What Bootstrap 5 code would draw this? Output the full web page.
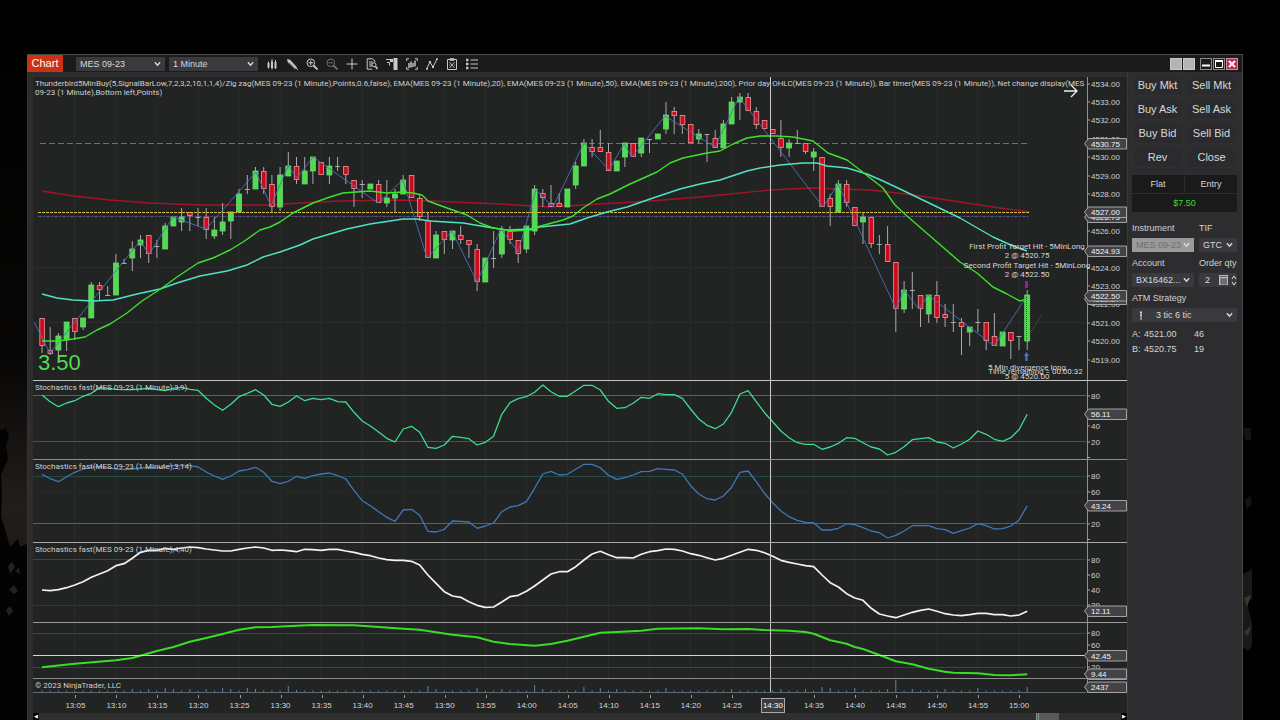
<!DOCTYPE html>
<html lang="en">
<head>
<meta charset="utf-8">
<meta name="viewport" content="width=device-width, initial-scale=1">
<title>Chart - MES 09-23</title>
<link href="https://cdn.jsdelivr.net/npm/bootstrap@5.3.0/dist/css/bootstrap.min.css" rel="stylesheet">
<style>
body{margin:0;background:#000;color:#d4d4d4;font-family:"Liberation Sans",Arial,sans-serif;font-size:8px;line-height:9px;overflow-x:hidden}
.backdrop{min-height:100vh;padding:54px 37px 0 27px;background:#010101;position:relative}
.scenery{position:absolute;top:0;bottom:0;width:32px;height:100%}
.scenery.west{left:0}
.scenery.east{right:11px;width:26px}
.win{min-height:calc(100vh - 54px);background:#2d2d2f;border:1px solid #47474a;border-bottom:0;border-left-color:#333;position:relative}
.titlebar{height:17px;background:#1b1b1b}
.tab-chart{background:#cb3213;color:#fff;font-size:11px;line-height:16px;width:36px;margin-left:-1px}
.pick{appearance:none;-webkit-appearance:none;border:0;border-radius:0;color:#d8d8d8;background:#3a393e url("data:image/svg+xml,%3Csvg xmlns='http://www.w3.org/2000/svg' viewBox='0 0 8 6'%3E%3Cpath d='M1 1l3 3.4L7 1' fill='none' stroke='%23ddd' stroke-width='1.5'/%3E%3C/svg%3E") no-repeat right 4px center/7px 6px;height:14px;padding:0 0 0 4px;font-size:9px;line-height:14px;width:100%}
.pick.tool{width:89px}
.pick.atm{padding-left:24px}
.picks{gap:4px;margin-left:13px}
.pick:disabled{background-color:#9a9a9a;color:#6e6e6e;opacity:1}
.toolbtn{border:0;background:none;padding:0;width:12px;height:14px;line-height:0;color:#c9c9c9}
.toolbtn svg{width:12px;height:12px}
.winbtns{gap:1px}
.winbtn{border:1px solid #8a8a8a;padding:0;width:12px;height:12px;background:#1c1c1c;line-height:0;color:#fff}
.winbtn.plain{background:#b4b4b4;border-color:#c8c8c8}
.winbtn.shut{background:#b8304a;border-color:#d98a98}
.winbtn svg{width:10px;height:10px;display:block}
.chart-area{padding:5px 0 0 5px;background:#2d2d2f;min-width:0}
.chart-grid{background:#222323}
.pane{position:relative}
.pane .plot{min-width:0}
.pane svg{display:block}
.plot svg{width:100%;height:100%}
.axis{width:41px;flex:none}
.axis svg{width:41px;height:100%;overflow:visible}
.axis text{font-size:8px;fill:#cfcfcf}
.h-price{height:304px}.h-s1{height:79px}.h-s2{height:83px}.h-s3{height:80px}.h-s4{height:56px}.h-vol{height:14px}
.pane-name,.note{font-family:Roboto,"Liberation Sans",sans-serif}
.pane-name{position:absolute;left:2px;top:2px;white-space:nowrap;color:#cfcfcf}
.pane-name.wide{right:0;white-space:normal}
.net{position:absolute;left:5px;bottom:6px;font-size:22px;line-height:24px;color:#4fdc4f}
.note{position:absolute;left:94.4%;transform:translateX(-50%);white-space:nowrap;text-align:center;color:#d6d6d6}
.note.n1{top:165px}.note.n2{top:184px}.note.n3{top:286px}.note.n4{top:290px;left:95.2%}
.go{position:absolute;right:8px;top:7px;width:14px;height:14px;border:0;padding:0;background:none;color:#eee;line-height:0}
.times{height:20px;padding-left:2%}
.times span{flex:0 0 3.98%;text-align:center;position:relative;padding-top:8px}
.times span::before{content:"";position:absolute;left:50%;top:2px;height:3px;width:1px;background:#999}
.times span.now b{color:#fff;background:#3c3c40;border:1px solid #aaa;padding:2px 1px}
.times span.now::before{display:none}
.scroller{height:7px;background:#2f2f30}
.scroller button{border:0;padding:0;background:#000;color:#fff;width:6px;height:7px;font-size:5px;line-height:7px}
.thumb{width:23px;background:#59595c;border-left:3px double #8a8a8a;margin-right:62px}
.side{width:115px;flex:none;padding:2px 5px 0 4px;border-left:1px solid #3b3b3d}
.order{background:#2b2b2d;border:1px solid #303033;border-radius:0;color:#d8d8d8;font-size:11px;line-height:12px;padding:4px 0;flex:1 1 0}
.order-row{margin-bottom:2px;gap:3px}
.pos-row{gap:1px;margin:7px 0 1px}
.pos{background:#1a1a1a;font-size:9px;line-height:18px;text-align:center}
.pos.gain{color:#3ddc3d}
.lab{font-size:9px;line-height:10px;color:#d0d0d0;display:block;margin-bottom:5px}
.fields{margin-top:6px}
.fields.first{margin-top:11px}
.w-inst{width:62px}
.w-tif{width:38px}
.qty{height:14px;background:#3a393e;width:38px}
.qty input{width:16px;background:none;border:0;color:#ddd;font-size:9px;padding:0 0 0 6px;outline:0;height:14px}
.spin{border:0;background:none;padding:0;width:6px;height:6px;line-height:0;color:#ddd}
.spins{margin-left:3px}
.atm-mark{left:7px;top:3px}
.book{font-size:9px;line-height:10px;margin-top:5px}
.book.first{margin-top:7px}
.book .k{width:12px}.book .p{width:50px}
</style>
</head>
<body>
<div class="backdrop">
  <svg class="scenery west" viewBox="0 0 32 720" preserveAspectRatio="none" aria-hidden="true">
    <defs><linearGradient id="haze" x1="0" y1="0" x2="0" y2="1"><stop offset="0" stop-color="#000"/><stop offset=".5" stop-color="#080706"/><stop offset=".7" stop-color="#211d1a"/><stop offset=".79" stop-color="#1d1a18"/><stop offset=".86" stop-color="#030303"/></linearGradient></defs>
    <rect width="32" height="720" fill="url(#haze)"/>
    <path d="M0 430l6-2 3 9-3 8 2 14-7 16 1 18-1 24 4 12 5 18 8-8 2 8 9-4V720H0z" fill="#030303"/>
    <path d="M8 566l4-4 3 5-5 7zM9 590l5-5 4 6-4 3zM6 610l4-4 3 5-4 5zM15 571l4-3 1 6z" fill="#24211e"/>
  </svg>
  <svg class="scenery east" viewBox="0 0 26 720" preserveAspectRatio="none" aria-hidden="true">
    <path d="M0 428h8v12H2zM2 500l5-4 2 7-5 7z" fill="#141312"/>
    <path d="M0 574l9-5v30l-5 4 5 20v23l-4 5-5-4z" fill="#1c1815"/>
    <path d="M1 598l7-3-4 12zM1 632l7-6-3 10z" fill="#3a3733"/>
  </svg>

  <main class="win d-flex flex-column">
    <header class="titlebar d-flex align-items-center">
      <div class="tab-chart text-center align-self-stretch">Chart</div>
      <div class="picks d-flex">
        <select aria-label="Chart instrument" class="pick tool"><option>MES 09-23</option></select>
        <select aria-label="Chart interval" class="pick tool"><option>1 Minute</option></select>
      </div>
      <nav id="tools" class="d-flex gap-2 ms-2" aria-label="Chart tools"></nav>
      <div class="winbtns d-flex ms-auto me-1">
        <button class="winbtn plain" aria-label="Link instrument"></button>
        <button class="winbtn plain me-1" aria-label="Link interval"></button>
        <button class="winbtn" aria-label="Minimize"><svg viewBox="0 0 10 10"><path d="M1 6.5h8" stroke="#fff" stroke-width="2"/></svg></button>
        <button class="winbtn" aria-label="Maximize"><svg viewBox="0 0 10 10"><path d="M1.5 2.5h7v6h-7z" fill="none" stroke="#fff"/><path d="M1 2h8" stroke="#fff" stroke-width="2"/></svg></button>
        <button class="winbtn shut" aria-label="Close window"><svg viewBox="0 0 10 10"><path d="M2 2l6 6M8 2L2 8" stroke="#fff" stroke-width="2"/></svg></button>
      </div>
    </header>

    <div class="d-flex flex-grow-1">
      <div class="chart-area flex-grow-1">
        <div class="chart-grid">
          <section class="pane d-flex h-price" data-pane="price">
            <div class="plot flex-grow-1 position-relative">
              <svg viewBox="33 77 1053 304" preserveAspectRatio="none"></svg>
              <div class="pane-name wide">Thunderbird5MinBuy(5,SignalBarLow,7,2,3,2,10,1,1,4)/Zig zag(MES 09-23 (1 Minute),Points,0.6,false), EMA(MES 09-23 (1 Minute),20), EMA(MES 09-23 (1 Minute),50), EMA(MES 09-23 (1 Minute),200), Prior day OHLC(MES 09-23 (1 Minute)), Bar timer(MES 09-23 (1 Minute)), Net change display(MES 09-23 (1 Minute),Bottom left,Points)</div>
              <div class="net">3.50</div>
              <div class="note n1">First Profit Target Hit - 5MinLong<br>2 @ 4520.75</div>
              <div class="note n2">Second Profit Target Hit - 5MinLong<br>2 @ 4522.50</div>
              <div class="note n3">5 Min divergence long<br>5 @ 4520.00</div>
              <div class="note n4">Time remaining = 00:00:32</div>
              <button class="go" aria-label="Return to latest bar"><svg viewBox="0 0 14 14"><path d="M0 7h13M7 1l6 6-6 6" fill="none" stroke="currentColor" stroke-width="1.3"/></svg></button>
            </div>
            <div class="axis"><svg viewBox="1086 77 41 304"></svg></div>
          </section>
          <section class="pane d-flex h-s1" data-pane="s1">
            <div class="plot flex-grow-1"><svg viewBox="33 381 1053 79" preserveAspectRatio="none"></svg></div>
            <div class="axis"><svg viewBox="1086 381 41 79"></svg></div>
            <div class="pane-name">Stochastics fast(MES 09-23 (1 Minute),3,9)</div>
          </section>
          <section class="pane d-flex h-s2" data-pane="s2">
            <div class="plot flex-grow-1"><svg viewBox="33 460 1053 83" preserveAspectRatio="none"></svg></div>
            <div class="axis"><svg viewBox="1086 460 41 83"></svg></div>
            <div class="pane-name">Stochastics fast(MES 09-23 (1 Minute),3,14)</div>
          </section>
          <section class="pane d-flex h-s3" data-pane="s3">
            <div class="plot flex-grow-1"><svg viewBox="33 543 1053 80" preserveAspectRatio="none"></svg></div>
            <div class="axis"><svg viewBox="1086 543 41 80"></svg></div>
            <div class="pane-name">Stochastics fast(MES 09-23 (1 Minute),4,40)</div>
          </section>
          <section class="pane d-flex h-s4" data-pane="s4">
            <div class="plot flex-grow-1"><svg viewBox="33 623 1053 56" preserveAspectRatio="none"></svg></div>
            <div class="axis"><svg viewBox="1086 623 41 56"></svg></div>
          </section>
          <section class="pane d-flex h-vol" data-pane="vol">
            <div class="plot flex-grow-1"><svg viewBox="33 679 1053 14" preserveAspectRatio="none"></svg></div>
            <div class="axis"><svg viewBox="1086 679 41 14"></svg></div>
            <div class="pane-name">© 2023 NinjaTrader, LLC</div>
          </section>
          <div class="d-flex">
            <div class="d-flex flex-grow-1 times" id="times"></div>
            <div class="axis"></div>
          </div>
        </div>
        <div class="scroller d-flex">
          <button aria-label="Scroll left">◀</button>
          <div class="thumb ms-auto"></div>
          <button aria-label="Scroll right">▶</button>
        </div>
      </div>

      <aside class="side">
        <div class="d-flex order-row"><button class="order">Buy Mkt</button><button class="order">Sell Mkt</button></div>
        <div class="d-flex order-row"><button class="order">Buy Ask</button><button class="order">Sell Ask</button></div>
        <div class="d-flex order-row"><button class="order">Buy Bid</button><button class="order">Sell Bid</button></div>
        <div class="d-flex order-row"><button class="order">Rev</button><button class="order">Close</button></div>
        <div class="d-flex pos-row"><div class="pos flex-fill w-50">Flat</div><div class="pos flex-fill w-50">Entry</div></div>
        <div class="pos gain">$7.50</div>
        <div class="d-flex justify-content-between fields first">
          <div class="w-inst"><label class="lab" for="inst">Instrument</label><select id="inst" class="pick" disabled><option>MES 09-23</option></select></div>
          <div class="w-tif"><label class="lab" for="tif">TIF</label><select id="tif" class="pick"><option>GTC</option></select></div>
        </div>
        <div class="d-flex justify-content-between fields">
          <div class="w-inst"><label class="lab" for="acct">Account</label><select id="acct" class="pick"><option>BX16462...</option></select></div>
          <div class="w-tif"><label class="lab text-nowrap" for="qty">Order qty</label>
            <div class="qty d-flex align-items-center"><input id="qty" value="2">
              <svg width="9" height="10" viewBox="0 0 9 10" class="ms-1" aria-hidden="true"><path d="M0 0h9v10H0z" fill="#bbb"/><path d="M1 1.5h7M1 4h7M1 6h7M1 8h7M2.8 3.5V10M5 3.5V10M7 3.5V10" stroke="#333" stroke-width=".7"/></svg>
              <div class="spins d-flex flex-column"><button class="spin" aria-label="Increase"><svg width="6" height="5" viewBox="0 0 6 5"><path d="M1 4l2-3 2 3" fill="none" stroke="#ddd"/></svg></button><button class="spin" aria-label="Decrease"><svg width="6" height="5" viewBox="0 0 6 5"><path d="M1 1l2 3 2-3" fill="none" stroke="#ddd"/></svg></button></div>
            </div></div>
        </div>
        <div class="fields"><label class="lab" for="atm">ATM Strategy</label>
          <div class="position-relative"><select id="atm" class="pick atm"><option>3 tic 6 tic</option></select>
          <svg class="position-absolute atm-mark" width="4" height="9" viewBox="0 0 4 9" aria-hidden="true"><path d="M2 0v9M1 1.5h2M1 4h2" stroke="#ddd"/></svg></div></div>
        <div class="book first d-flex"><span class="k">A:</span><span class="p">4521.00</span><span>46</span></div>
        <div class="book d-flex"><span class="k">B:</span><span class="p">4520.75</span><span>19</span></div>
      </aside>
    </div>
  </main>
</div>

<script src="https://cdn.jsdelivr.net/npm/bootstrap@5.3.0/dist/js/bootstrap.bundle.min.js"></script>
<script>
const X0 = 42, STEP = 8.21, barX = i => X0 + STEP * i;

// One bar per minute from 13:01: direction, body top, body bottom, high, low
const bars = `r318,346,318,353 r350,354,327,355 g336,350,333,363 g322,340,322,351 r318,332,318,340 g318,327,318,330 g285,318,282,318 r285,290,282,300 d295,295,286,296 g263,295,254,295
d263,263,259,264 g249,258,241,271 g240,245,235,258 r235,254,235,263 d246,246,240,258 g226,249,223,249 g217,226,217,226 g217,222,208,231 r212,216,212,231 d217,217,208,226
r217,230,208,239 g230,236,217,239 g222,231,203,235 g212,221,212,239 g194,212,189,212 d189,189,175,194 g171,189,167,189 r171,189,167,194 r184,207,175,212 g175,207,167,211
g166,176,152,176 r166,180,157,184 g171,184,157,184 g157,171,157,184 r162,175,162,175 g166,175,157,184 d166,166,157,171 r166,175,166,184 r180,189,180,207 d184,184,180,198
g184,189,184,189 r184,203,180,203 g198,203,180,207 g194,198,189,212 g180,194,175,194 r175,198,175,198 r198,217,194,221 r220,258,212,258 g235,258,231,258 r231,240,231,254
g231,240,231,249 r235,240,226,244 r240,245,240,258 r249,282,244,291 g258,282,258,282 d258,258,231,268 g231,254,226,258 r231,240,226,244 r240,254,240,263 g226,249,226,253
g189,231,185,235 r193,198,189,207 r203,207,185,207 r203,207,193,207 g189,207,189,207 g166,185,162,189 g143,166,139,166 r147,152,139,157 r147,152,130,152 r152,171,143,171
g161,171,161,171 g143,157,143,167 r143,157,143,157 g138,153,138,157 d139,139,139,153 g134,139,134,139 g115,129,102,134 r111,116,107,134 r115,125,115,134 r124,143,124,143
g134,139,129,143 d134,134,134,162 r138,148,130,148 g124,148,120,148 g102,124,97,124 g97,102,93,120 r97,111,93,111 r111,125,107,129 r120,129,120,129 r129,134,129,134
r138,148,120,157 g143,148,139,157 d143,143,130,143 r143,152,143,154 g152,157,148,171 r157,207,157,207 r198,207,194,226 g184,212,180,212 r184,203,180,207 r207,226,207,226
g217,222,212,244 r217,244,217,248 d244,244,235,254 r244,262,226,262 r262,309,262,332 g290,309,281,313 d290,290,272,309 r295,309,295,327 g295,314,295,323 r295,318,281,323
r314,318,304,327 d322,322,304,332 r322,327,318,355 g327,332,327,346 d322,322,309,332 r322,341,322,350 r336,346,313,346 g332,346,332,346 r332,341,332,359 d336,336,336,350
g295,341,290,350`.trim().split(/\s+/).map(s => ({k: s[0], v: s.slice(1).split(',').map(Number)}));

const ema20 = "42,341 58,341 73,339 85,337 97,330 110,324 127,313 142,301 162,288 177,277 198,263 213,258 230,250 243,242 260,230 270,227 280,222 293,213 313,203 330,197 343,193 370,191 387,193 403,192 413,193 422,195 428,201 447,208 467,215 480,223 493,228 513,231 530,230 537,227 563,220 573,216 583,208 597,199 610,194 630,184 657,172 670,163 683,158 707,153 720,151 733,144 747,138 760,136 777,136 793,137 813,141 828,153 847,160 860,170 883,188 895,205 907,216 937,242 960,262 977,273 993,287 1007,294 1020,301 1027,299";
const ema50 = "42,294 57,298 73,300 93,301 113,300 137,294 160,289 177,283 200,276 227,271 247,265 263,257 280,252 300,245 313,239 347,229 370,224 390,221 403,219 417,219 430,221 463,223 487,227 507,230 530,229 540,227 570,224 587,218 607,212 627,207 653,198 680,189 700,184 720,180 747,171 760,168 780,165 803,163 817,163 827,166 847,168 867,174 883,181 900,189 927,202 960,218 993,237 1013,246 1027,251";
const ema200 = "42,191 73,196 110,200 150,203 200,205 270,205 300,203 340,201 400,200 430,201 500,204 550,207 600,204 650,201 700,197 770,190 810,188 870,190 907,194 960,202 1000,208 1030,212";
const zig = "34,322 50,353 140,241 149,254 173,217 206,229 256,172 271,206 288,166 297,178 313,157 378,203 403,180 427,258 452,231 477,282 501,229 518,252 536,190 553,207 584,143 609,170 624,144 632,157 665,116 715,147 739,97 823,207 838,184 896,309 904,290 919,309 928,295 994,346 1027,296";

// Indicator samples, one per minute, in thirds of a pixel below y = 375
const s1 = [60,80,95,84,77,64,55,38,40,43,44,44,42,40,44,47,40,37,43,46,70,90,106,88,65,55,44,60,88,94,81,63,77,70,74,70,80,81,112,138,153,171,190,201,162,154,172,217,220,210,184,187,191,210,202,184,118,83,71,65,52,30,50,64,64,47,31,31,45,79,100,98,85,67,70,56,59,59,70,102,132,151,161,147,112,57,47,80,113,140,168,188,203,208,208,223,216,205,188,190,203,216,222,240,232,215,194,191,188,201,205,219,207,193,168,178,193,199,188,164,118];
const s2 = [298,311,320,305,292,282,277,275,278,282,284,282,279,278,278,276,272,271,272,276,291,303,313,303,288,284,277,292,319,326,319,304,310,302,297,294,302,312,346,377,392,410,427,439,405,403,421,469,471,463,438,439,441,460,453,444,410,396,392,380,340,297,289,300,298,283,268,268,278,301,313,308,300,290,289,281,283,285,297,332,357,371,375,363,337,292,288,320,355,383,408,425,436,442,443,465,465,460,446,449,458,468,473,489,481,468,452,452,452,461,464,475,467,459,446,452,462,461,453,435,392];
const s3 = [645,647,644,638,630,620,607,597,587,572,566,550,532,526,526,520,523,519,516,518,522,525,528,528,523,519,516,519,526,525,527,530,523,524,526,523,523,528,532,538,542,549,554,556,556,559,570,600,625,650,663,667,680,691,697,696,681,665,661,649,633,615,597,590,590,575,555,537,529,539,548,548,549,538,530,527,522,523,528,536,541,548,555,550,541,532,523,526,533,544,556,562,567,572,575,600,623,636,656,669,676,700,717,723,728,720,712,706,702,709,716,720,722,719,715,715,719,719,723,720,709];
const s4 = [[0,877],[4,866],[9,856],[11,849],[14,828],[16,816],[18,800],[20,789],[22,777],[24,764],[26,757],[28,756],[31,752],[33,750],[38,751],[41,756],[44,761],[46,764],[48,772],[50,779],[53,787],[55,800],[57,807],[60,812],[62,807],[64,797],[66,785],[68,773],[70,771],[73,767],[75,761],[80,760],[83,763],[86,762],[88,765],[91,767],[93,771],[94,776],[96,796],[98,806],[99,816],[100,822],[102,840],[104,859],[106,868],[108,881],[110,890],[111,893],[114,895],[116,900],[118,901],[120,898]];
const vols = {11:3,13:3,15:4,16:3,18:3,20:3,22:4,23:3,25:4,26:3,30:6,31:2,47:6,48:3,53:4,56:3,60:7,61:3,66:5,68:4,70:3,76:4,84:3,90:3,93:3,95:5,96:4,99:4,103:3,104:12,106:3,110:3,114:4,119:2,120:5};

const fix = p => p.map(([x,y]) => x.toFixed(1) + ',' + y.toFixed(1)).join(' ');
const line = (pts, c, w=1, extra='') => `<polyline points="${pts}" fill="none" stroke="${c}" stroke-width="${w}" stroke-linejoin="round" vector-effect="non-scaling-stroke" ${extra}/>`;
const h = (y, c, extra='') => `<path d="M33 ${y}H1086" stroke="${c}" vector-effect="non-scaling-stroke" ${extra}/>`;
const v = (x, a, b, c, w=1) => `<path d="M${x} ${a}V${b}" stroke="${c}" stroke-width="${w}" vector-effect="non-scaling-stroke"/>`;
const sample = a => fix(a.map((z,i) => [barX(i), 375 + z/3]));

function grid(a, b){ let s=''; for(let i=4;i<120;i+=5) s += v(barX(i).toFixed(1), a, b, '#2b2d2d'); return s; }
const cross = (a,b) => v(770.5, a, b, '#c8c8c8');

const plots = {
  price(){
    let s = grid(77,380) + h(267.5,'#2b2d2d') + h(322.5,'#2b2d2d');
    s += '<path d="M40 143.5H1030" stroke="#1f9a78" stroke-dasharray="6 3" vector-effect="non-scaling-stroke"/>';
    s += '<path d="M38 216.5H1030" stroke="#514b82" stroke-dasharray="4 1 2 1" vector-effect="non-scaling-stroke"/>';
    s += line(ema200,'#a3142a',1.3);
    bars.forEach((b,i) => {
      const x = barX(i), [t,o,hi,lo] = b.v;
      s += v(x.toFixed(1), hi, lo, '#a9a9a9');
      if (b.k === 'd') s += `<path d="M${(x-2.5).toFixed(1)} ${t+.5}h5" stroke="#a9a9a9"/>`;
      else if (b.k === 'g') s += `<rect x="${(x-2.5).toFixed(1)}" y="${t}" width="5" height="${o-t}" fill="#50dc50" stroke="#6fd36f" stroke-width=".8"/>`;
      else s += `<rect x="${(x-2.2).toFixed(1)}" y="${t+.5}" width="4.6" height="${Math.max(o-t-1,2)}" fill="#cf0a20" stroke="#e08a8a" stroke-width=".9"/>`;
    });
    s += line(zig,'#4a74b4',.9);
    s += '<path d="M38 212.5H1030" stroke="#d6bd4a" stroke-dasharray="3 1" vector-effect="non-scaling-stroke"/>';
    s += line(ema50,'#4fe3c4',1.4) + line(ema20,'#3ce22c',1.4);
    s += '<path d="M1026.5 297V341" stroke="#1b6b1b" stroke-dasharray="1 1"/><path d="M1030 334l12-20" stroke="#2e4a2e"/>';
    s += '<rect x="1025" y="281" width="3" height="7" fill="#a014a8"/><path d="M1026.5 352l2.5 4h-1.500v5h-2v-5h-1.500z" fill="#4a78d8"/>';
    return s + cross(77,381) + h(380.5,'#c4c4c4');
  },
  s1(){ return grid(381,459) + h(395.5,'#1c7f68') + h(441.5,'#1a6c59') + line(sample(s1),'#3fdc90',1.3) + cross(381,460) + h(459.5,'#8d8d8d'); },
  s2(){ return grid(460,542) + h(476.5,'#234a43') + h(492.5,'#272929') + h(523.5,'#1c7f68') + line(sample(s2),'#3f78b8',1.3) + cross(460,543) + h(542.5,'#a8a8a8'); },
  s3(){ return grid(543,622) + h(559.5,'#235046') + h(605.5,'#213f39') + line(sample(s3),'#f2f2f2',1.7) + cross(543,623) + h(622.5,'#9a9a9a'); },
  s4(){ return grid(623,678) + h(633.5,'#1b564c') + h(667.5,'#1b564c') + line(fix(s4.map(([i,z]) => [barX(i), 375+z/3])),'#3bdc26',2) + h(655.5,'#d4d4d4') + cross(623,679) + h(678.5,'#8d8d8d'); },
  vol(){
    let s = '';
    for (let i=0;i<=120;i++){ const n = vols[i] || 1.5; s += v(barX(i).toFixed(1), 692-n, 692, '#5a86ac'); }
    return s + cross(679,693) + h(692.5,'#5c6b74');
  }
};

const num = (y, t) => `<path d="M1087 ${y}h3" stroke="#aaa"/><text x="1091" y="${y+3}">${t}</text>`;
const tag = (y, t) => `<path d="M1084.500 ${y}l4-5h38v10.500h-38z" fill="#434347" stroke="#b0b0b0" stroke-width=".9"/><text x="1091" y="${y+3}" style="fill:#f2f2f2">${t}</text>`;
const vert = (a,b) => `<path d="M1087.500 ${a}V${b}" stroke="#8f8f8f"/>`;
const foot = (y,c) => `<path d="M1086 ${y}h41" stroke="${c}"/>`;
const axes = {
  price(){
    let s = vert(77,381);
    for (let p=4534;p>=4519;p--) s += num(Math.round(83.7 + (4534-p)*18.39), p + '.00');
    return s + tag(217,'4526.75') + tag(212,'4527.00') + tag(143.5,'4530.75') + tag(251,'4524.93') + tag(299,'4522.27') + tag(295.5,'4522.50') + foot(380.5,'#c4c4c4');
  },
  s1(){ return vert(381,460) + num(396,'80') + num(411,'60') + num(426,'40') + num(442,'20') + '<path d="M1087 457.500h3" stroke="#aaa"/>' + tag(414,'56.11') + foot(459.5,'#8d8d8d'); },
  s2(){ return vert(460,543) + num(476,'80') + num(492,'60') + num(508,'40') + num(524,'20') + '<path d="M1087 539.500h3" stroke="#aaa"/>' + tag(505.5,'43.24') + foot(542.5,'#a8a8a8'); },
  s3(){ return vert(543,623) + num(560,'80') + num(575,'60') + num(590,'40') + num(605,'20') + tag(611,'12.11') + foot(622.5,'#9a9a9a'); },
  s4(){ return vert(623,679) + num(633,'80') + num(645,'60') + num(667,'20') + tag(655.5,'42.45') + tag(674,'9.44') + foot(678.5,'#8d8d8d'); },
  vol(){ return vert(679,693) + tag(687,'2437'); }
};
document.querySelectorAll('[data-pane]').forEach(p => {
  const k = p.dataset.pane;
  p.querySelector('.plot svg').innerHTML = plots[k]();
  p.querySelector('.axis svg').innerHTML = axes[k]();
});

let t = '';
for (let i=0;i<24;i++){
  const m = 13*60 + 5 + i*5, s = Math.floor(m/60) + ':' + String(m%60).padStart(2,'0');
  t += `<span class="${s==='14:30'?'now':''}"><b class="fw-normal">${s}</b></span>`;
}
document.getElementById('times').innerHTML = t;

const S = 'fill="none" stroke="currentColor"';
const icons = [
  ['Chart style', `<path d="M2.500 3.500v7M6 1v10.500M9.500 2v9" ${S}/><path d="M1.500 5h2v4.500h-2zM5 3.500h2v6.500H5zM8.500 4h2v6h-2z" fill="currentColor"/>`],
  ['Drawing tools', `<path d="M1 1l3 .8 7 7.400-2 2-7.200-7z" fill="currentColor"/><path d="M3 4.500l6 6" stroke="#333" stroke-width=".7"/><path d="M10 10l2 2" ${S}/>`],
  ['Zoom in', `<circle cx="4.800" cy="4.800" r="3.800" ${S}/><path d="M4.800 2.500v4.600M2.500 4.800h4.600" ${S}/><path d="M7.500 7.500l4 4" ${S} stroke-width="1.800"/>`],
  ['Zoom out', `<g opacity=".5"><circle cx="4.800" cy="4.800" r="3.800" ${S}/><path d="M2.500 4.800h4.600" ${S}/><path d="M7.500 7.500l4 4" ${S} stroke-width="1.800"/></g>`],
  ['Crosshair', `<path d="M6 .5v11M.5 6h11" ${S}/>`],
  ['Data box', `<path d="M9 4V3L6.500.8H1.200v10.400h5" ${S}/><path d="M3 4h4M3 6h3M3 8h3" ${S}/><circle cx="8" cy="6.800" r="2" ${S}/><path d="M9.500 8.500l2 2.500" ${S} stroke-width="1.600"/>`],
  ['Chart trader', `<path d="M7.500 0h4v12h-4zM4 1h3v3H4z" fill="currentColor"/><path d="M0 1.500h4M1 4.500h2.500v3" ${S}/>`],
  ['Snapshot', `<path d="M.7 3V.7H3M9 .7h2.300V3M.7 9v2.300H3M9 11.300h2.300V9" ${S}/><path d="M3 5v5M5 3.500v6M7 5v4M9 2.500v6" ${S} stroke-width="1.400"/>`],
  ['Indicators', `<path d="M.8 10.500L4 4l3 5 4-8" ${S}/><path d="M3 3h2v2H3zM6 8h2v2H6zM0 10h1.800v1.800H0zM10 .2h1.800V2H10z" fill="currentColor"/>`],
  ['Strategies', `<path d="M1.500 1.500h9v10h-9zM4 .7h4v1.600H4z" ${S}/><path d="M3.500 4l5 6M8.500 4l-5 6M3.500 7h1M8 7h1" ${S} stroke-width=".9"/>`],
  ['Properties', `<path d="M0 .8h2.400v2.400H0zM0 4.800h2.400v2.400H0zM0 8.800h2.400v2.400H0z" fill="currentColor"/><path d="M4.500 2H12M4.500 6H12M4.500 10H12" ${S}/>`]
];
document.getElementById('tools').innerHTML = icons.map(([n,d]) => `<button class="toolbtn" aria-label="${n}"><svg viewBox="0 0 12 12">${d}</svg></button>`).join('');
</script>
</body>
</html>
